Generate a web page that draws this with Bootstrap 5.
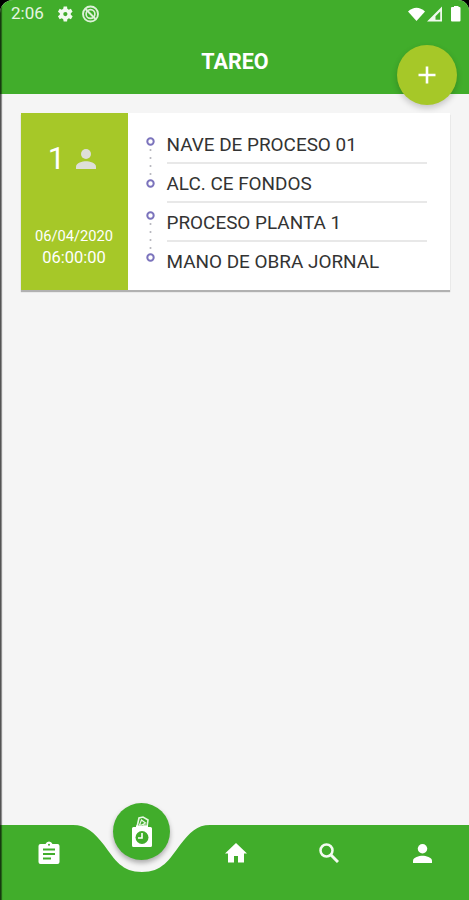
<!DOCTYPE html>
<html lang="es">
<head>
<meta charset="utf-8">
<meta name="viewport" content="width=device-width, initial-scale=1">
<title>Tareo</title>
<link href="https://cdn.jsdelivr.net/npm/bootstrap@5.3.0/dist/css/bootstrap.min.css" rel="stylesheet">
<style>
body{background:#000;font-family:Roboto,"Liberation Sans",sans-serif;color:#333}
.phone{height:900px;background:#f5f5f5;border-radius:13px 11px 0 0;overflow:hidden}
.phone::before{content:"";position:absolute;z-index:5;left:0;top:0;width:3px;height:100%;background:linear-gradient(90deg,rgba(0,0,0,.66) 0 1px,rgba(0,0,0,.42) 1px 2px,rgba(0,0,0,.06) 2px)}
.topbar{height:94px;background:#41ad2b}
.status{height:27px;padding:0 8px 0 11px}
.clock{font-size:17px;line-height:27px;width:45px;color:#e6f5e2}
.screen-title{font-size:21.5px;font-weight:700;line-height:26px;margin-top:22px;padding-left:1px}
.fab{right:12px;top:45px;width:60px;height:60px;background:#a6c828;box-shadow:0 3px 6px rgba(0,0,0,.2)}
.task{margin:19px 19px 0 21px;height:177px;background:#fff;box-shadow:0 2px 1px rgba(0,0,0,.28)}
.task-side{width:107px;background:#a6c828}
.count{font-size:31px;line-height:36px;padding-top:28px;gap:11px;padding-right:5px}
.when{line-height:22px;margin-bottom:21px;padding-right:1px}
.date{font-size:14.7px}.hour{font-size:16.5px}
.rail{width:38.5px;padding:22px 0 0 16.5px}
.rows{width:260px;padding-top:12px}
.rowline{height:39px;line-height:39px;font-size:18.92px;border-bottom:2px solid #e8e8e8;white-space:nowrap}
.rowline:last-child{border:0}
.bottom{height:75px}
.bottom .wave{left:0;top:0}
.tab{top:0;height:56px;padding-left:2px}
.center-tab{left:113px;top:-22px;width:57px;height:57px;background:#41ad2b;box-shadow:0 3px 5px rgba(0,0,0,.3)}
svg{display:block}
</style>
<script src="https://cdn.jsdelivr.net/npm/bootstrap@5.3.0/dist/js/bootstrap.bundle.min.js"></script>
</head>
<body>
<div class="phone position-relative d-flex flex-column">
  <header class="topbar position-relative text-white flex-shrink-0">
    <div class="status d-flex align-items-center">
      <span class="clock">2:06</span>
      <svg width="17" height="18" viewBox="2 2 20 20" fill="#f2faf0"><path fill-rule="evenodd" d="M19.400 13a7.500 7.500 0 0 0 0-2l2.100-1.600-2-3.500-2.500 1a7.500 7.500 0 0 0-1.700-1L15 3.200h-4l-.5 2.700a7.500 7.500 0 0 0-1.700 1l-2.500-1-2 3.500L6.500 11a7.500 7.500 0 0 0 0 2l-2.200 1.600 2 3.500 2.500-1a7.500 7.500 0 0 0 1.700 1l.5 2.700h4l.4-2.700a7.500 7.500 0 0 0 1.700-1l2.500 1 2-3.500zM13 9.500a2.500 2.500 0 1 1 0 5 2.500 2.500 0 0 1 0-5z"/></svg>
      <svg class="ms-2" width="19" height="18" viewBox="0 0 18 18" fill="none" stroke="#dcf1d7"><circle cx="9" cy="9" r="7.500" stroke-width="1.900"/><circle cx="9" cy="9" r="4.400" stroke-width="1.600"/><path d="M4 4l10 10" stroke-width="1.900"/></svg>
      <svg class="ms-auto" width="55" height="20" viewBox="0 0 55 20" fill="#fff"><path d="M2 7.500Q10.500 0 19 7.500L10.500 17z"/><path fill-rule="evenodd" d="M21 17.500L36 2.500V17.500zM29.500 15.700H34.200V7.500L29.500 12.300z" fill-opacity=".92"/><path d="M46 3h2V2h4.500v1h1q1 0 1 1v12.500q0 1-1 1H46q-1 0-1-1V4q0-1 1-1z"/></svg>
    </div>
    <h1 class="screen-title text-center mb-0">TAREO</h1>
    <button class="fab btn rounded-circle border-0 p-0 position-absolute d-flex align-items-center justify-content-center" aria-label="Agregar">
      <svg width="18" height="18" viewBox="0 0 18 18" stroke="#fff" stroke-width="2.600"><path d="M9 .5v17M.5 9h17"/></svg>
    </button>
  </header>

  <main class="flex-grow-1">
    <article class="task d-flex">
      <div class="task-side text-white d-flex flex-column justify-content-between">
        <div class="count d-flex align-items-center justify-content-center">
          <span>1</span>
          <svg width="20" height="20" viewBox="0 0 20 20" fill="#dedfd9"><circle cx="10" cy="5" r="5"/><path d="M0 20v-2.500C0 14 6.500 12.300 10 12.300s10 1.700 10 5.200V20z"/></svg>
        </div>
        <div class="when text-center"><div class="date">06/04/2020</div><div class="hour">06:00:00</div></div>
      </div>
      <div class="rail">
        <svg width="11" height="134" viewBox="0 0 11 134" fill="none">
          <g stroke="#b9b9c0" stroke-width="1.700" stroke-dasharray="2 6"><path d="M5.500 14v29M5.500 88v29"/></g>
          <g fill="#fff" stroke="#7b73bc" stroke-width="2"><circle cx="5.500" cy="6.500" r="3.200"/><circle cx="5.500" cy="48.500" r="3.200"/><circle cx="5.500" cy="80.500" r="3.200"/><circle cx="5.500" cy="122.500" r="3.200"/></g>
        </svg>
      </div>
      <div class="rows">
        <div class="rowline">NAVE DE PROCESO 01</div>
        <div class="rowline">ALC. CE FONDOS</div>
        <div class="rowline">PROCESO PLANTA 1</div>
        <div class="rowline">MANO DE OBRA JORNAL</div>
      </div>
    </article>
  </main>

  <nav class="bottom position-relative flex-shrink-0">
    <svg class="wave position-absolute" width="469" height="75" viewBox="0 0 469 75"><path fill="#41ad2b" d="M0 0H73C86 0 94 7 104 20C115 35 122 47 142 47S169 35 180 20C190 7 197 0 210 0H469V75H0z"/></svg>
    <div class="tab position-relative d-flex align-items-center">
      <a href="#" class="col d-flex justify-content-center" aria-label="Tareas"><svg width="22" height="24" viewBox="0 0 22 24"><path fill="#fff" d="M2.500 3H7.500Q8.500.5 11 .5T14.500 3H19.500Q21.500 3 21.500 5V21Q21.500 23 19.500 23H2.500Q.5 23 .5 21V5Q.5 3 2.500 3z"/><path stroke="#41ad2b" stroke-width="2" d="M5 8.500h12M5 13h12M5 17.500h8"/><circle cx="11" cy="3.800" r="1" fill="#41ad2b"/></svg></a>
      <span class="col"></span>
      <a href="#" class="col d-flex justify-content-center" aria-label="Inicio"><svg width="22" height="20" viewBox="0 0 22 20"><path fill="#fff" d="M11 0L22 10.500H19V19.500H13V13H9V19.500H3V10.500H0z"/></svg></a>
      <a href="#" class="col d-flex justify-content-center" aria-label="Buscar"><svg width="20" height="20" viewBox="0 0 20 20" fill="none" stroke="#f3fbf1"><circle cx="7.500" cy="7.500" r="6" stroke-width="2.500"/><path d="M12 12l7 7" stroke-width="3"/></svg></a>
      <a href="#" class="col d-flex justify-content-center" aria-label="Perfil"><svg width="19" height="19" viewBox="0 0 20 20" fill="#fff"><circle cx="10" cy="5" r="5"/><path d="M0 20v-2.500C0 14 6.500 12.300 10 12.300s10 1.700 10 5.200V20z"/></svg></a>
    </div>
    <a href="#" class="center-tab rounded-circle position-absolute d-flex align-items-center justify-content-center" aria-label="Tareo">
      <svg width="22" height="32" viewBox="0 0 22 32"><path d="M6 11L8 2L12 1L17 4L16 11" fill="none" stroke="#e8f7e4" stroke-width="1.600"/><path d="M8.500 9l2-5 4 3-4 2zM12 9h3" fill="none" stroke="#e8f7e4" stroke-width="1.200"/><path fill="#fff" d="M2.500 11H5V9.500H17V11H19.500Q21 11 21 12.500V29.500Q21 31 19.500 31H2.500Q1 31 1 29.500V12.500Q1 11 2.500 11z"/><circle cx="11" cy="21.500" r="6.500" fill="#41ad2b"/><path d="M11 17v5H7" fill="none" stroke="#fff" stroke-width="1.600"/></svg>
    </a>
  </nav>
</div>
</body>
</html>
